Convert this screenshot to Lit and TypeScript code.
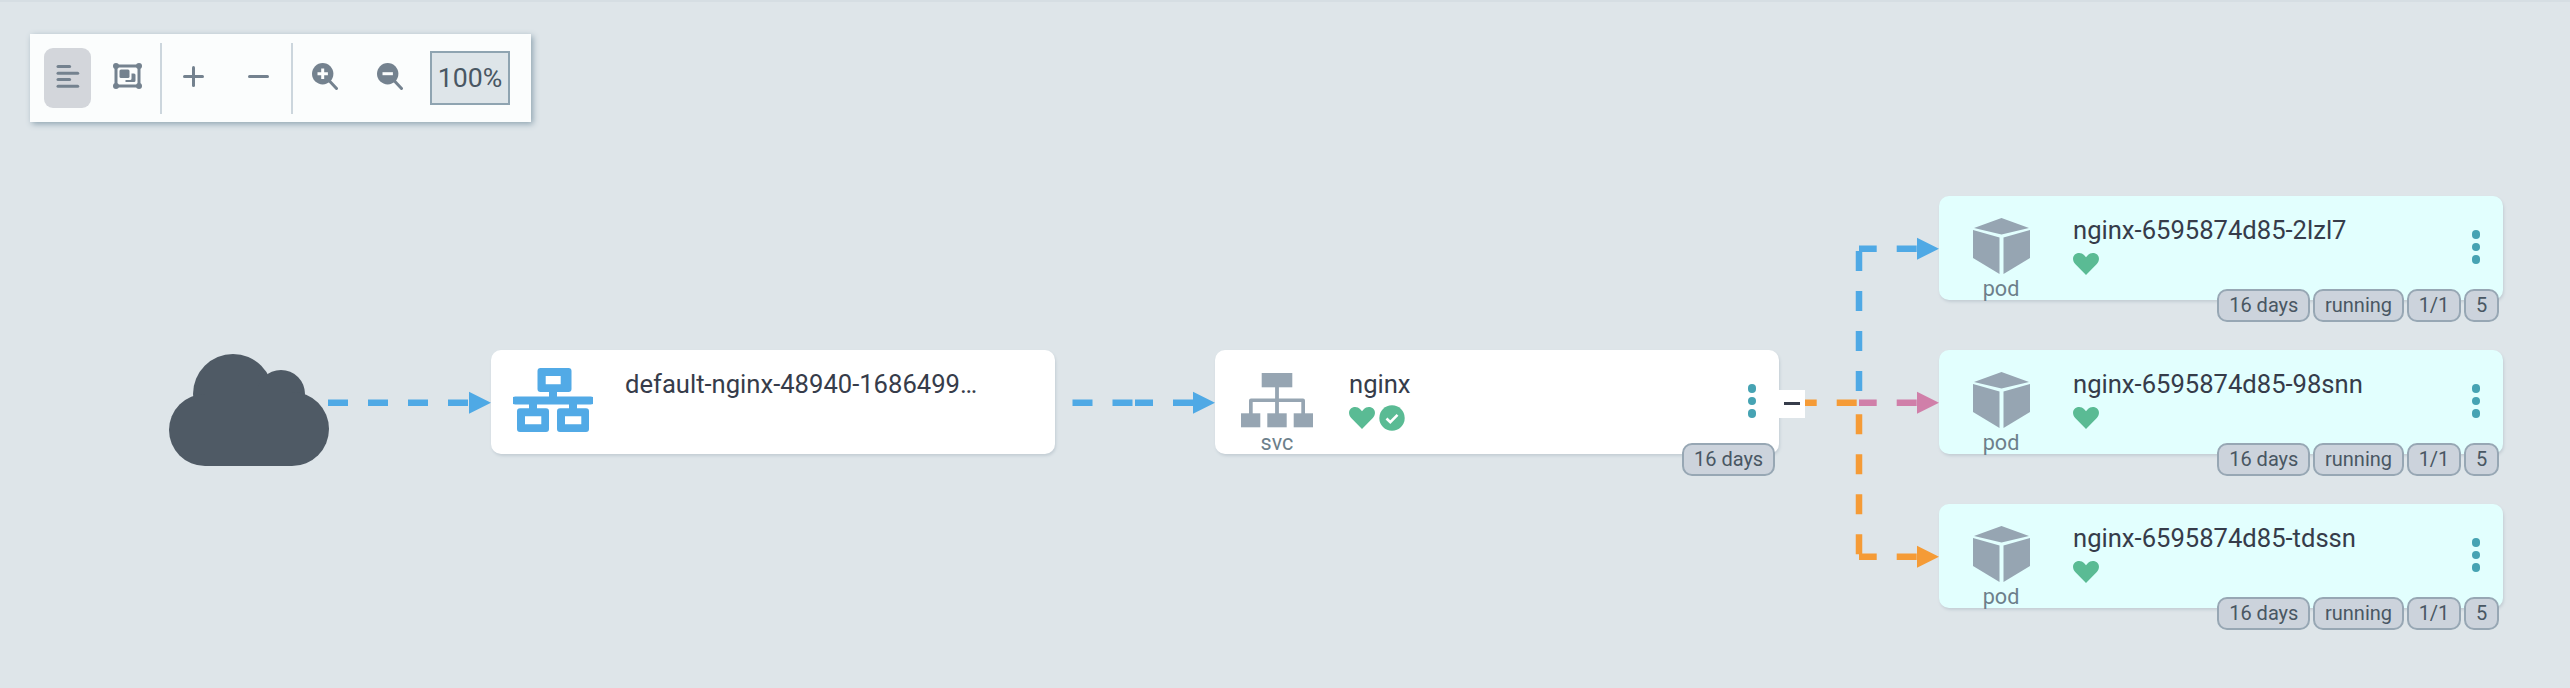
import { LitElement, html, css, svg } from "lit";
import { customElement } from "lit/decorators.js";

const BLUE = "#4fa9e5";
const PINK = "#d07fa9";
const ORANGE = "#f59b36";

const hline = (x1: number, x2: number, y: number, color: string, offset = 0) =>
  svg`<path d="M${x1} ${y}H${x2}" stroke=${color} stroke-width="6.500" fill="none" stroke-dasharray="20 20" stroke-dashoffset=${offset}></path>`;
const vline = (x: number, y1: number, y2: number, color: string) =>
  svg`<path d="M${x} ${y1}V${y2}" stroke=${color} stroke-width="6.500" fill="none" stroke-dasharray="20 20"></path>`;
const head = (x: number, y: number, color: string) =>
  svg`<polygon points="${x - 22},${y - 11} ${x},${y} ${x - 22},${y + 11}" fill=${color}></polygon>`;

const heart = html`<svg class="heart" viewBox="0 0 26 22"><path fill="#5abb94" d="M13 22 2.200 11C-.7 8-.7 3.400 2.200 1.300 5-.8 9-.2 11 2l2 2.200L15 2c2-2.200 6-2.800 8.800-.7 2.900 2.100 2.900 6.700 0 9.700z"></path></svg>`;
const check = html`<svg class="check" viewBox="0 0 26 26"><circle cx="13" cy="13" r="12.700" fill="#5abb94"></circle><path d="M7.500 13.500l3.800 3.700 7.200-7.400" fill="none" stroke="#fff" stroke-width="2.600"></path></svg>`;
const ingressIcon = html`<svg class="ingress" viewBox="0 0 80 64" fill="#52aae6"><path fill-rule="evenodd" d="M27.500 0h28a3 3 0 0 1 3 3v18a3 3 0 0 1-3 3H44v4.500h33.700a3.800 3.800 0 0 1 0 8H64v3.700h9a3 3 0 0 1 3 3V61a3 3 0 0 1-3 3H47a3 3 0 0 1-3-3V43.200a3 3 0 0 1 3-3h9v-3.700H24v3.700h9a3 3 0 0 1 3 3V61a3 3 0 0 1-3 3H7a3 3 0 0 1-3-3V43.200a3 3 0 0 1 3-3h9v-3.700H2.300a3.800 3.800 0 0 1 0-8H36V24h-8.500a3 3 0 0 1-3-3V3a3 3 0 0 1 3-3zM32.700 8v8.300h15V8zM12 48.300v8h16.300v-8zM52 48.300v8h16.300v-8z"></path></svg>`;
const svcIcon = html`<svg class="svc" viewBox="0 0 72 55" fill="#96a5b2"><rect x="20.700" y="0" width="30.600" height="14.300"></rect><rect x="34.100" y="14" width="3.800" height="27"></rect><path d="M8 41V27.500a2 2 0 0 1 2-2h52a2 2 0 0 1 2 2V41h-3.700V29H11.700v12z"></path><rect x="0" y="40.300" width="19.300" height="14"></rect><rect x="26.300" y="40.300" width="19.400" height="14"></rect><rect x="52.700" y="40.300" width="19.300" height="14"></rect></svg>`;
const cubeIcon = html`<svg class="cube" viewBox="0 0 57 56" fill="#96a5b2"><path d="M28.500 0 56 10 28.500 16.500 1 10z"></path><path d="M0 12 26.500 19.500V56L0 40z"></path><path d="M57 12 30.500 19.500V56L57 40z"></path></svg>`;

@customElement("app-root")
export class AppRoot extends LitElement {
  static styles = css`
    :host { display: block; width: 2570px; height: 688px; position: relative; overflow: hidden; background: #dee5e9; font-family: Roboto, "Liberation Sans", sans-serif; color: #363c4a; }
    .topline { height: 2px; background: #d6dee3; }
    .toolbar { position: absolute; left: 30px; top: 34px; width: 501px; height: 88px; box-sizing: border-box; padding-left: 14px; display: flex; align-items: center; background: #fbfdfd; box-shadow: 2px 2px 6px #8fa4b1; }
    .btn { width: 47px; height: 60px; box-sizing: border-box; padding-bottom: 4px; border-radius: 9px; display: flex; align-items: center; justify-content: center; flex: none; }
    .btn.active { background: #d3d6db; }
    .btn svg { display: block; }
    .sep { width: 2px; height: 71px; background: #ccd6dd; flex: none; }
    .g1 { margin-left: 13px; margin-right: 9px; }
    .g2 { margin-left: 8px; margin-right: 17.500px; }
    .g3 { margin-left: 9.500px; margin-right: 8.500px; }
    .g4 { margin-right: 18px; }
    .zoomval { margin-left: 16.500px; width: 80px; height: 54px; box-sizing: border-box; border: 2px solid #8fa4b1; background: #dee5e9; display: flex; align-items: center; justify-content: center; font-size: 26.670px; color: #495763; }
    .edges { position: absolute; left: 0; top: 0; }
    .cloud { position: absolute; left: 169px; top: 354px; width: 160px; height: 112px; }
    .node { position: absolute; width: 564px; height: 104px; box-sizing: border-box; border-radius: 10px; background: #fff; box-shadow: 1px 2px 3px #c4ced5; display: flex; }
    .node.pod { background: #e2fffe; }
    .kind { width: 124px; flex: none; display: flex; flex-direction: column; align-items: center; }
    .ingress { width: 80px; height: 64px; margin-top: 17.700px; }
    .svc { width: 72px; height: 55px; margin-top: 22.700px; margin-bottom: 4.300px; display: block; }
    .cube { width: 57px; height: 56px; margin-top: 22px; margin-bottom: 3.600px; display: block; }
    .kind-label { font-size: 21.600px; line-height: 22px; color: #6d7f8b; }
    .info { margin-left: 10px; padding-top: 17.600px; min-width: 0; }
    .name { font-size: 25.600px; line-height: 32px; color: #363c4a; white-space: nowrap; }
    .status { display: flex; align-items: center; gap: 4px; height: 26px; margin-top: 5.900px; }
    .heart { width: 26px; height: 22px; display: block; }
    .check { width: 26px; height: 26px; display: block; }
    .dots { position: absolute; right: 22.700px; top: 34px; display: flex; flex-direction: column; gap: 4px; }
    .dots span { width: 8.600px; height: 8.600px; border-radius: 50%; background: #46a3b3; }
    .tags { position: absolute; right: 4px; bottom: -22px; display: flex; gap: 3px; }
    .tag { height: 33px; box-sizing: border-box; padding: 0 9.800px; border: 2.500px solid #97a7b4; border-radius: 10px; background: #ccd3dc; font-size: 20px; line-height: 28px; color: #495763; }
    .collapse { position: absolute; left: 1779px; top: 390px; width: 26px; height: 28px; background: #fff; }
    .collapse span { position: absolute; left: 4.500px; top: 12px; width: 16px; height: 2.500px; background: #363c4a; }
  `;

  private pods = [
    { name: "nginx-6595874d85-2lzl7", top: 196 },
    { name: "nginx-6595874d85-98snn", top: 350 },
    { name: "nginx-6595874d85-tdssn", top: 504 },
  ];

  private tags(list: string[]) {
    return html`<div class="tags">${list.map((t) => html`<span class="tag">${t}</span>`)}</div>`;
  }

  private dots() {
    return html`<div class="dots"><span></span><span></span><span></span></div>`;
  }

  render() {
    return html`
      <div class="topline"></div>
      <svg class="edges" width="2570" height="688">
        ${hline(288, 469, 402.7, BLUE)}${head(491, 402.7, BLUE)}
        ${hline(1072.5, 1133, 402.7, BLUE)}${hline(1135, 1193, 402.7, BLUE, 2)}${head(1215, 402.7, BLUE)}
        ${vline(1859, 391, 248.7, BLUE)}
        ${hline(1859, 1917, 248.7, BLUE, 2.3)}${head(1939, 248.7, BLUE)}
        ${hline(1859, 1917, 402.7, PINK, 2.3)}${head(1939, 402.7, PINK)}
        ${vline(1859, 414.3, 556, ORANGE)}
        ${hline(1859, 1917, 556.7, ORANGE, 2.3)}${head(1939, 556.7, ORANGE)}
        ${hline(1796.7, 1857, 402.7, ORANGE)}
      </svg>

      <svg class="cloud" viewBox="0 0 160 112" fill="#4f5a65">
        <circle cx="64" cy="40" r="40"></circle>
        <circle cx="112" cy="40" r="24"></circle>
        <circle cx="36" cy="76" r="36"></circle>
        <circle cx="123" cy="75" r="37"></circle>
        <rect x="36" y="36" width="87" height="76"></rect>
      </svg>

      <div class="node" style="left:491px;top:350px">
        <div class="kind">${ingressIcon}</div>
        <div class="info"><div class="name">default-nginx-48940-1686499…</div></div>
      </div>

      <div class="node" style="left:1215px;top:350px">
        <div class="kind">${svcIcon}<span class="kind-label">svc</span></div>
        <div class="info">
          <div class="name">nginx</div>
          <div class="status">${heart}${check}</div>
        </div>
        ${this.dots()}
        ${this.tags(["16 days"])}
      </div>
      <div class="collapse"><span></span></div>

      ${this.pods.map(
        (p) => html`
          <div class="node pod" style="left:1939px;top:${p.top}px">
            <div class="kind">${cubeIcon}<span class="kind-label">pod</span></div>
            <div class="info">
              <div class="name">${p.name}</div>
              <div class="status">${heart}</div>
            </div>
            ${this.dots()}
            ${this.tags(["16 days", "running", "1/1", "5"])}
          </div>
        `
      )}

      <div class="toolbar">
        <div class="btn active"><svg width="24" height="23" viewBox="0 0 24 23" fill="#74828f"><rect x="0.500" y="0" width="14.600" height="3" rx="1.500"></rect><rect x="0.500" y="6.700" width="22.700" height="3" rx="1.500"></rect><rect x="0.500" y="13" width="14.600" height="3" rx="1.500"></rect><rect x="0.500" y="19.700" width="22.700" height="3" rx="1.500"></rect></svg></div>
        <div class="btn g1"><svg width="29" height="26" viewBox="0 0 29 26" fill="#74828f"><rect x="3" y="3" width="23" height="20" fill="none" stroke="#74828f" stroke-width="3"></rect><circle cx="3" cy="3" r="3"></circle><circle cx="26" cy="3" r="3"></circle><circle cx="3" cy="23" r="3"></circle><circle cx="26" cy="23" r="3"></circle><rect x="6.500" y="6.500" width="10" height="8.500" rx="1.500"></rect><path d="M18.500 10.500H21a1.500 1.500 0 0 1 1.500 1.500v5.500a1.500 1.500 0 0 1-1.500 1.500H12.500v-2H17a1.500 1.500 0 0 0 1.500-1.500z"></path></svg></div>
        <div class="sep"></div>
        <div class="btn g2"><svg width="21" height="21" viewBox="0 0 21 21" fill="#74828f"><rect x="9" y="0" width="3" height="21" rx="1.500"></rect><rect x="0" y="9" width="21" height="3" rx="1.500"></rect></svg></div>
        <div class="btn"><svg width="21" height="21" viewBox="0 0 21 21" fill="#74828f"><rect x="0" y="9" width="21" height="3" rx="1.500"></rect></svg></div>
        <div class="sep g3"></div>
        <div class="btn g4"><svg width="26" height="27" viewBox="0 0 26 27"><circle cx="10.700" cy="10.700" r="10.700" fill="#74828f"></circle><path d="M17.500 18l7 7.500" stroke="#74828f" stroke-width="3" stroke-linecap="round"></path><path d="M10.700 5.500v10.400M5.500 10.700h10.400" stroke="#fbfdfd" stroke-width="3"></path></svg></div>
        <div class="btn"><svg width="26" height="27" viewBox="0 0 26 27"><circle cx="10.700" cy="10.700" r="10.700" fill="#74828f"></circle><path d="M17.500 18l7 7.500" stroke="#74828f" stroke-width="3" stroke-linecap="round"></path><path d="M5.500 10.700h10.400" stroke="#fbfdfd" stroke-width="3"></path></svg></div>
        <div class="zoomval">100%</div>
      </div>
    `;
  }
}
